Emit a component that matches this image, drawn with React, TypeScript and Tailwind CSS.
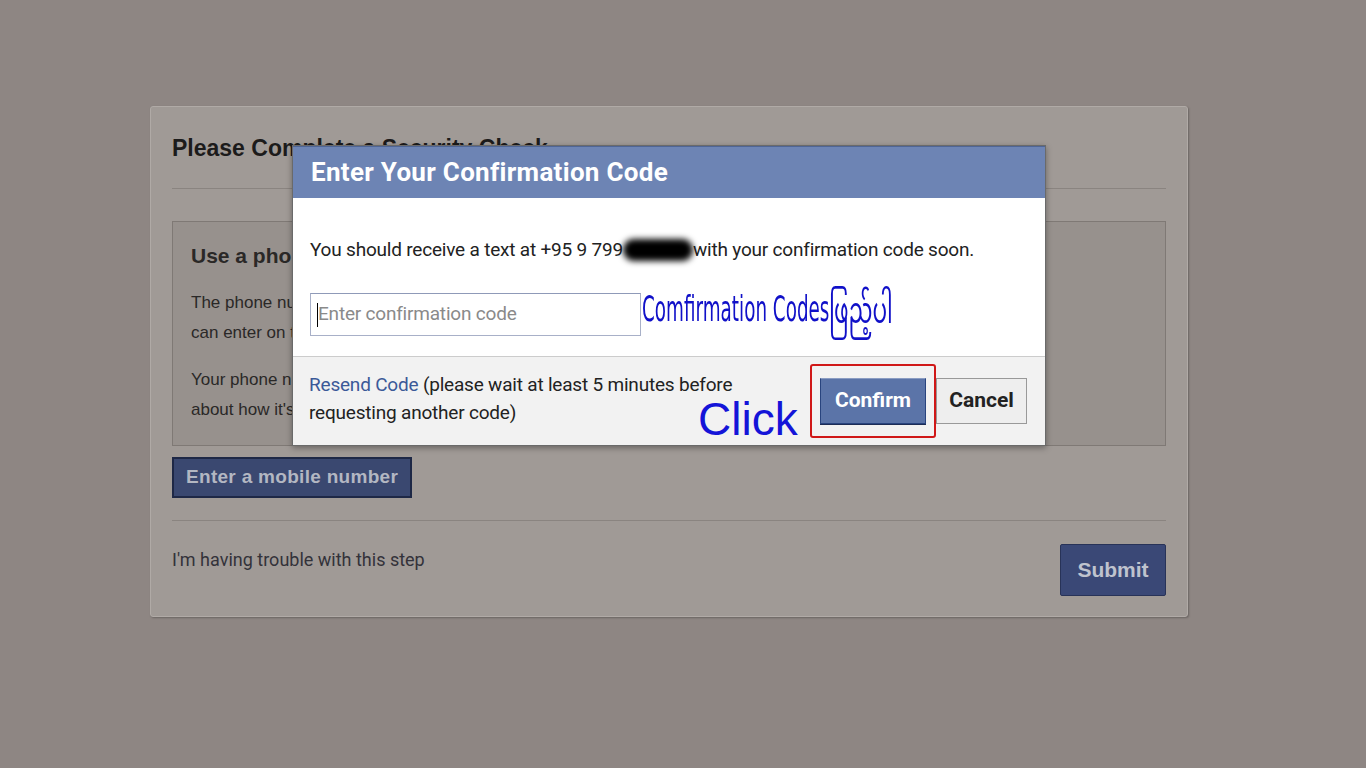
import React from "react";

const narrow = { fontFamily: 'Roboto, "Liberation Sans", sans-serif' };
const annot = { fontFamily: '"DejaVu Sans", "Noto Sans Myanmar", sans-serif' };

const SecurityCheck: React.FC = () => {
  return (
    <div className="ml-[150px] pt-[106px]">
      <div className="w-[1038px] h-[511px] bg-[#a09a96] border border-[#b0aaa6] rounded-[3px] shadow-[1px_1px_2px_rgba(0,0,0,0.25)] px-[21px] pt-[26px]">
        <h1 className="text-[23px] font-bold text-[#1c1b1b] leading-[30px]">Please Complete a Security Check</h1>
        <div className="mt-[25px] border-t border-[#8a8480]" />

        {/* phone box */}
        <div className="mt-[32px] h-[225px] bg-[#97918d] border border-[#7f7975] px-[18px] pt-[20px] text-[#2a2827]">
          <h2 className="text-[21px] font-bold leading-[28px]">Use a phone to verify your account</h2>
          <p className="mt-[18px] text-[17px] leading-[30px]">
            The phone number you enter will receive a text message with a six-digit confirmation code that you
            <br />
            can enter on the next screen.
          </p>
          <p className="mt-[17px] text-[17px] leading-[30px]">
            Your phone number will be saved to your account so you can use it to log in later. Learn more
            <br />
            about how it's used.
          </p>
        </div>

        <button className="mt-[11px] h-[41px] px-[12px] bg-[#3a4870] border-2 border-[#1e2846] text-[#b3b7c2] text-[19px] font-bold tracking-[0.3px]">
          Enter a mobile number
        </button>

        <div className="mt-[22px] border-t border-[#8a8480]" />

        <div className="mt-[23px] flex items-start justify-between">
          <span className="mt-[2px] text-[18px] text-[#33323a]" style={narrow}>I'm having trouble with this step</span>
          <button className="h-[52px] w-[106px] bg-[#3a4876] border border-[#283358] rounded-[2px] text-[#bfc3ce] text-[21px] font-bold">
            Submit
          </button>
        </div>
      </div>
    </div>
  );
};

const ConfirmDialog: React.FC = () => {
  return (
    <div className="absolute left-[292px] top-[145px] w-[754px] border border-[#6a6a6a] shadow-[0_2px_6px_rgba(0,0,0,0.35)]" style={narrow}>
      <div className="h-[52px] bg-[#6d84b4] border-t border-[#4f6595] px-[18px] flex items-center">
        <span className="text-white text-[26px] font-bold tracking-[0.3px]">Enter Your Confirmation Code</span>
      </div>
      <div className="h-[158px] bg-white px-[17px] pt-[38px]">
        <p className="text-[19px] text-[#222] flex items-center tracking-[-0.2px]">
          You should receive a text at +95 9 799
          <span className="inline-block w-[70px] h-[22px] rounded-full bg-black blur-[3px]" />
          with your confirmation code soon.
        </p>
        <div className="mt-[27px] flex items-center">
          <div className="shrink-0 w-[331px] h-[43px] border border-[#a8b0c8] border-t-[#8f9ab8] flex items-center px-[6px]">
            <span className="w-[1px] h-[24px] bg-black" />
            <span className="text-[19px] text-[#8a8a8a] tracking-[-0.2px]">Enter confirmation code</span>
          </div>
          {/* hand-written annotation */}
          <div className="ml-[1px] -mt-[12px] flex items-center text-[36px] text-[#1010c8]" style={annot}>
            <div className="w-[184px] shrink-0">
              <span className="inline-block whitespace-nowrap origin-left scale-x-[0.51]">Comfirmation Codes</span>
            </div>
            <div className="ml-[3px] w-[60px] shrink-0 mt-[4px]">
              <span className="inline-block whitespace-nowrap origin-left scale-x-[0.6]">ဖြည့်ပါ</span>
            </div>
          </div>
        </div>
      </div>
      <div className="h-[89px] bg-[#f2f2f2] border-t border-[#cccccc] pl-[16px] pr-[18px] flex items-center">
        <p className="w-[430px] text-[19px] leading-[28px] text-[#222] -mt-[4px] tracking-[-0.2px]">
          <span className="text-[#3b5998]">Resend Code</span> (please wait at least 5 minutes before requesting another code)
        </p>
        <span className="ml-[-41px] mt-[36px] text-[46px] text-[#1414d8] leading-none" style={{ fontFamily: '"Liberation Sans", sans-serif' }}>
          Click
        </span>
        <div className="ml-auto flex items-center">
          <div className="border-2 border-[#d01818] rounded-[3px] px-[8px] py-[12px]">
            <button className="h-[46px] w-[106px] bg-[#5b74a8] border border-[#29447e] border-t-[#8a9cc2] text-white text-[21px] font-bold shadow-[0_1px_0_#1d2c55]">
              Confirm
            </button>
          </div>
          <button className="h-[46px] w-[91px] bg-[#eeeeee] border border-[#999] text-[#222] text-[21px] font-bold">
            Cancel
          </button>
        </div>
      </div>
    </div>
  );
};

export default function App() {
  return (
    <div className="relative w-[1366px] h-[768px] overflow-hidden bg-[#8e8683]" style={{ fontFamily: '"Liberation Sans", Arial, sans-serif' }}>
      <SecurityCheck />
      <ConfirmDialog />
    </div>
  );
}
